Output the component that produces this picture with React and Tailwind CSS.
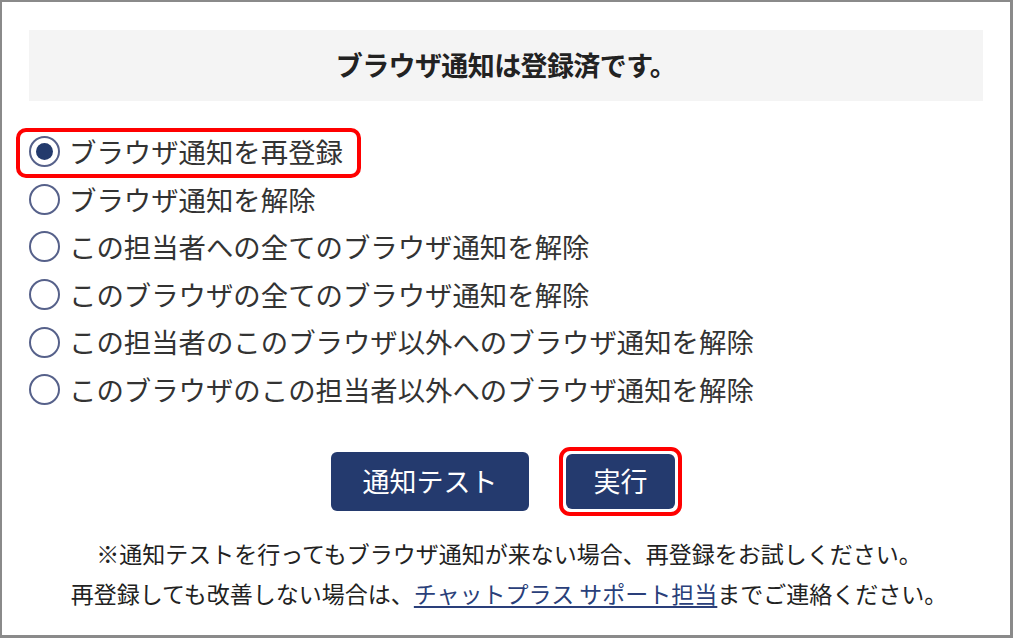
const options = [
  'ブラウザ通知を再登録',
  'ブラウザ通知を解除',
  'この担当者への全てのブラウザ通知を解除',
  'このブラウザの全てのブラウザ通知を解除',
  'この担当者のこのブラウザ以外へのブラウザ通知を解除',
  'このブラウザのこの担当者以外へのブラウザ通知を解除',
];

const Radio = ({ checked }) => (
  <span className="flex h-[31px] w-[31px] shrink-0 items-center justify-center rounded-full border-[2px] border-[#56618a] bg-white">
    {checked && <span className="h-[17px] w-[17px] rounded-full bg-[#233a6c]" />}
  </span>
);

export default function App() {
  return (
    <div
      className="flex h-[638px] w-[1013px] flex-col border-t-2 border-l-2 border-r-[3px] border-b-[3px] border-[#8a8a8a] bg-white px-[27px] pt-[28px] text-[#333]"
      style={{ fontFamily: '"Noto Sans CJK JP", "Noto Sans", sans-serif' }}
    >
      <div className="flex h-[71px] items-center justify-center bg-[#f4f4f4]">
        <h1 className="text-[27px] font-bold tracking-[-0.6px] text-[#222]">ブラウザ通知は登録済です。</h1>
      </div>

      <div className="mt-[27px] flex flex-col">
        {options.map((label, i) => (
          <label key={label} className="relative flex h-[47.6px] items-center gap-[9px]">
            {i === 0 && (
              <span className="absolute left-[-13px] top-0 h-[50px] w-[345px] rounded-[10px] border-[4px] border-[#ff0000]" />
            )}
            <Radio checked={i === 0} />
            <span className="text-[27.4px] leading-none">{label}</span>
          </label>
        ))}
      </div>

      <div className="mt-[38px] flex items-center justify-center gap-[37px] pr-[6px]">
        <button className="h-[59px] w-[198px] rounded-[6px] bg-[#243a6e] text-[27px] text-white">
          通知テスト
        </button>
        <span className="rounded-[11px] border-[4px] border-[#ff0000] p-[3px] -m-[7px]">
          <button className="block h-[55px] w-[109px] rounded-[6px] bg-[#243a6e] text-[27px] text-white">
            実行
          </button>
        </span>
      </div>

      <div className="mt-[22px] flex flex-col items-center text-[23px] leading-[40px] text-[#222]">
        <p className="pl-[6px]">※通知テストを行ってもブラウザ通知が来ない場合、再登録をお試しください。</p>
        <p className="pl-[6px]">
          再登録しても改善しない場合は、
          <a href="#" className="text-[#2a3f7a] underline underline-offset-[3px]">
            チャットプラス サポート担当
          </a>
          までご連絡ください。
        </p>
      </div>
    </div>
  );
}
